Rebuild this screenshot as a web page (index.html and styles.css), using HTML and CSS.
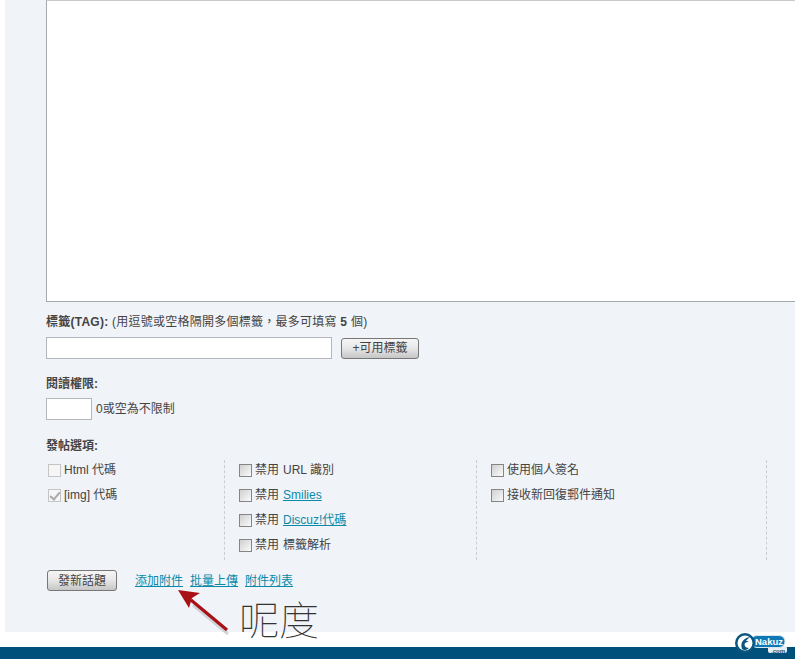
FILE: index.html
```html
<!DOCTYPE html>
<html lang="zh-Hant">
<head>
<meta charset="utf-8">
<title>發新話題</title>
<link rel="stylesheet" href="styles.css">
</head>
<body>
<main class="panel">
  <div class="editor"></div>
  <p class="line tag-label"><b>標籤(TAG):</b> (用逗號或空格隔開多個標籤，最多可填寫 <b>5</b> 個)</p>
  <div class="row tag-row">
    <input class="field field-tag" type="text">
    <button class="btn btn-tag" type="button">+可用標籤</button>
  </div>
  <p class="line read-label"><b>閱讀權限:</b></p>
  <div class="row read-row">
    <input class="field field-read" type="text">
    <span>0或空為不限制</span>
  </div>
  <p class="line opt-label"><b>發帖選項:</b></p>
  <div class="options">
    <div class="col col-1">
      <label class="opt"><input class="cb cb-off" type="checkbox" disabled>Html 代碼</label>
      <label class="opt"><input class="cb cb-off" type="checkbox" checked disabled>[img] 代碼</label>
    </div>
    <div class="col col-2">
      <label class="opt"><input class="cb" type="checkbox">禁用<span class="item">URL 識別</span></label>
      <label class="opt"><input class="cb" type="checkbox">禁用<a class="item" href="#">Smilies</a></label>
      <label class="opt"><input class="cb" type="checkbox">禁用<a class="item" href="#">Discuz!代碼</a></label>
      <label class="opt"><input class="cb" type="checkbox">禁用<span class="item">標籤解析</span></label>
    </div>
    <div class="col col-3">
      <label class="opt"><input class="cb" type="checkbox">使用個人簽名</label>
      <label class="opt"><input class="cb" type="checkbox">接收新回復郵件通知</label>
    </div>
  </div>
  <div class="row actions">
    <button class="btn btn-post" type="button">發新話題</button>
    <nav class="links">
      <a href="#">添加附件</a>
      <a href="#">批量上傳</a>
      <a href="#">附件列表</a>
    </nav>
  </div>
  <svg class="arrow" width="60" height="50" viewBox="0 0 60 50" aria-hidden="true">
    <path d="M52 45 L17 16" stroke="#b9bcc2" stroke-width="3" fill="none" opacity=".6" transform="translate(1 2)"/>
    <path d="M52 43 L16 13" stroke="#a81216" stroke-width="3.2" fill="none"/>
    <path d="M3 3 L25 6 L17 11 L14 21 Z" fill="#a81216"/>
  </svg>
  <span class="note">呢度</span>
</main>
<footer class="footer">
  <svg class="logo" width="54" height="24" viewBox="0 0 54 24" aria-hidden="true">
    <rect x="34" y="14" width="19" height="7" rx="2" fill="#e8eef3"/>
    <rect x="17" y="3.5" width="34" height="12" rx="6" fill="#0e78b4" stroke="#d8e6ee" stroke-width="1"/>
    <circle cx="11" cy="11" r="10" fill="#0b5680"/>
    <circle cx="11" cy="11" r="7.5" fill="#fff"/>
    <path d="M16 5 C9 6 6 11 8 17 C10 19 13 18 15 16 C11 16 10 13 11 11 L15 9 L12 9 C13 7 15 6 16 5Z" fill="#0b5680"/>
    <text class="logo-name" x="21" y="13">Nakuz</text>
    <text class="logo-com" x="37" y="20.5">.com</text>
  </svg>
</footer>
</body>
</html>
```

FILE: styles.css
```css
* { box-sizing: border-box; }
html, body { margin: 0; padding: 0; height: 659px; overflow: hidden; background: #fff; }
body {
  font-family: "Liberation Sans", "Noto Sans CJK TC", sans-serif;
  font-size: 12px;
  line-height: 16px;
  color: #444;
}
.panel {
  position: relative;
  margin-left: 5px;
  height: 632px;
  padding-left: 41px;
  background: #f0f3f8;
  overflow: visible;
}
.editor {
  height: 302px;
  background: #fff;
  border: 1px solid #a5a8ad;
  border-top-color: #c8cacd;
  border-right: 0;
}
.line { margin: 0; }
.line b { color: #444; font-weight: 700; }
.tag-label { padding-top: 12px; letter-spacing: .25px; }
.row { display: flex; align-items: center; }
.tag-row { margin-top: 7px; gap: 9px; }
.field {
  height: 22px;
  padding: 0;
  background: #fff;
  border: 1px solid #b4b7bb;
  border-radius: 0;
}
.field-tag { width: 286px; }
.field-read { width: 46px; }
.btn {
  padding: 0;
  height: 21px;
  font: inherit;
  color: #444;
  background: linear-gradient(#f5f5f5 0%, #e9e9e9 45%, #c6c6c6 100%);
  border: 1px solid #777;
  border-radius: 3px;
}
.btn-tag { width: 78px; }
.read-label { padding-top: 17px; }
.read-row { margin-top: 6px; gap: 4px; }
.opt-label { padding-top: 18px; }
.options {
  display: grid;
  grid-template-columns: 179px 252px 290px;
  margin-top: 6px;
  height: 100px;
}
.col {
  display: flex;
  flex-direction: column;
  gap: 9px;
  padding-top: 2px;
  border-right: 1px dashed #c9ccd0;
}
.col-1 { padding-left: 2px; }
.col-2, .col-3 { padding-left: 14px; }
.opt { display: flex; align-items: center; height: 16px; white-space: pre; }
.item { margin-left: 4px; }
.cb {
  appearance: none;
  flex: none;
  position: relative;
  width: 13px;
  height: 13px;
  margin: 0 3px 0 0;
  background: linear-gradient(135deg, #cfcfcf, #fbfbfb);
  border: 1px solid #858585;
}
.cb-off { background: #f6f6f6; border-color: #c4c4c4; }
.cb-off:checked::after {
  content: "";
  position: absolute;
  left: 3px;
  top: 0;
  width: 4px;
  height: 8px;
  border: solid #aaa;
  border-width: 0 2px 2px 0;
  transform: rotate(40deg);
}
a { color: #0a8aa8; text-decoration: underline; }
.actions { margin-top: 10px; }
.btn-post { width: 70px; margin-left: 1px; }
.links { display: flex; gap: 7px; margin-left: 18px; }
.arrow { position: absolute; left: 170px; top: 587px; }
.note {
  position: absolute;
  left: 234px;
  top: 594px;
  font-family: "Noto Sans CJK TC", sans-serif;
  font-size: 40px;
  font-weight: 100;
  line-height: 48px;
  color: #333;
}
.footer { position: relative; margin-top: 15px; height: 12px; background: #00507c; }
.logo { position: absolute; left: 734px; top: -15px; }
.logo-name { font: 700 9.5px "Liberation Sans", sans-serif; fill: #fff; }
.logo-com { font: 700 6px "Liberation Sans", sans-serif; fill: #0b5680; }
```
